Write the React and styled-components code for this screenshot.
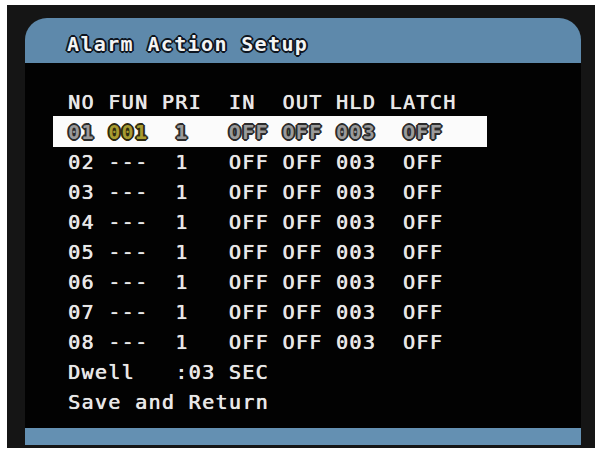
import React from "react";
import styled, { createGlobalStyle, css } from "styled-components";

const C = 13.4; // character cell advance in px

const GlobalStyle = createGlobalStyle`
  html, body {
    margin: 0;
    padding: 0;
    background: #ffffff;
  }
  #root {
    width: 600px;
    height: 451px;
    overflow: hidden;
  }
`;

const Monitor = styled.div`
  box-sizing: border-box;
  width: 588px;
  height: 443px;
  margin: 5px 5px 0 7px;
  padding: 13px 14px 3px 18px;
  background: #151515;
  display: flex;
  flex-direction: column;
`;

const TitleBar = styled.div`
  height: 45px;
  flex: none;
  background: #5e89ab;
  border-radius: 22px 22px 0 0;
  display: flex;
  align-items: center;
  padding: 6px 0 0 42px;
  box-sizing: border-box;
`;

const outline = (col, thick) => css`
  text-shadow: 1px 0 ${col}, -1px 0 ${col}, 0 1px ${col}, 0 -1px ${col},
    1px 1px ${col}, -1px -1px ${col}, 1px -1px ${col}, -1px 1px ${col}
    ${thick ? `, 2px 0 ${col}, -2px 0 ${col}, 0 2px ${col}, 0 -2px ${col}` : ""};
`;

const osdFont = css`
  font-family: "DejaVu Sans Mono", "Liberation Mono", monospace;
  font-size: 20px;
  letter-spacing: ${C - 12.04}px;
  white-space: pre;
`;

const Title = styled.h1`
  ${osdFont};
  margin: 0;
  font-weight: bold;
  color: #f4f4f4;
  line-height: 1;
  ${outline("#0d1520", true)};
`;

const Body = styled.div`
  flex: 1;
  background: #020202;
  padding: 25px 0 0 28px;
  display: flex;
  flex-direction: column;
`;

const Row = styled.div`
  display: flex;
  align-items: center;
  box-sizing: border-box;
  width: 434px;
  height: ${(p) => p.$h || 30}px;
  padding-left: 15px;
  background: ${(p) => (p.$active ? "#fbfbfb" : "transparent")};
`;

const tones = {
  normal: css`
    color: #e8e8e8;
    font-weight: normal;
    text-shadow: 0.4px 0 0 #e8e8e8, 0 0 1px rgba(255, 255, 255, 0.5);
  `,
  selected: css`
    color: #9a9a9a;
    font-weight: bold;
    ${outline("#2b2b2b", true)};
  `,
  yellow: css`
    color: #a89b30;
    font-weight: bold;
    ${outline("#2e2a10", true)};
  `,
};

const Cell = styled.span`
  ${osdFont};
  flex: none;
  width: ${(p) => (p.$w ? `${p.$w * C}px` : "auto")};
  padding-left: ${(p) => (p.$indent || 0) * C}px;
  box-sizing: border-box;
  line-height: 1;
  ${(p) => tones[p.$tone || "normal"]};
`;

const Footer = styled.div`
  height: 17px;
  flex: none;
  background: #6490b2;
`;

const cols = [
  { key: "no", label: "NO", w: 3, indent: 0 },
  { key: "fun", label: "FUN", w: 4, indent: 0 },
  { key: "pri", label: "PRI", w: 5, indent: 1 },
  { key: "in", label: "IN", w: 4, indent: 0 },
  { key: "out", label: "OUT", w: 4, indent: 0 },
  { key: "hld", label: "HLD", w: 4, indent: 0 },
  { key: "latch", label: "LATCH", w: 0, indent: 1 },
];

const rows = [
  { no: "01", fun: "001", pri: "1", in: "OFF", out: "OFF", hld: "003", latch: "OFF" },
  ...["02", "03", "04", "05", "06", "07", "08"].map((n) => ({
    no: n,
    fun: "---",
    pri: "1",
    in: "OFF",
    out: "OFF",
    hld: "003",
    latch: "OFF",
  })),
];

export default function App() {
  return (
    <>
      <GlobalStyle />
      <Monitor>
        <TitleBar>
          <Title>Alarm Action Setup</Title>
        </TitleBar>
        <Body>
          <Row $h={28}>
            {cols.map((c) => (
              <Cell key={c.key} $w={c.w}>
                {c.label}
              </Cell>
            ))}
          </Row>
          {rows.map((r, i) => {
            const active = i === 0;
            return (
              <Row key={r.no} $active={active} $h={active ? 31 : 30}>
                {cols.map((c) => (
                  <Cell
                    key={c.key}
                    $w={c.w}
                    $indent={c.indent}
                    $tone={active ? (c.key === "fun" ? "yellow" : "selected") : "normal"}
                  >
                    {r[c.key]}
                  </Cell>
                ))}
              </Row>
            );
          })}
          <Row>
            <Cell $w={8}>Dwell</Cell>
            <Cell>:03 SEC</Cell>
          </Row>
          <Row>
            <Cell>Save and Return</Cell>
          </Row>
        </Body>
        <Footer />
      </Monitor>
    </>
  );
}
